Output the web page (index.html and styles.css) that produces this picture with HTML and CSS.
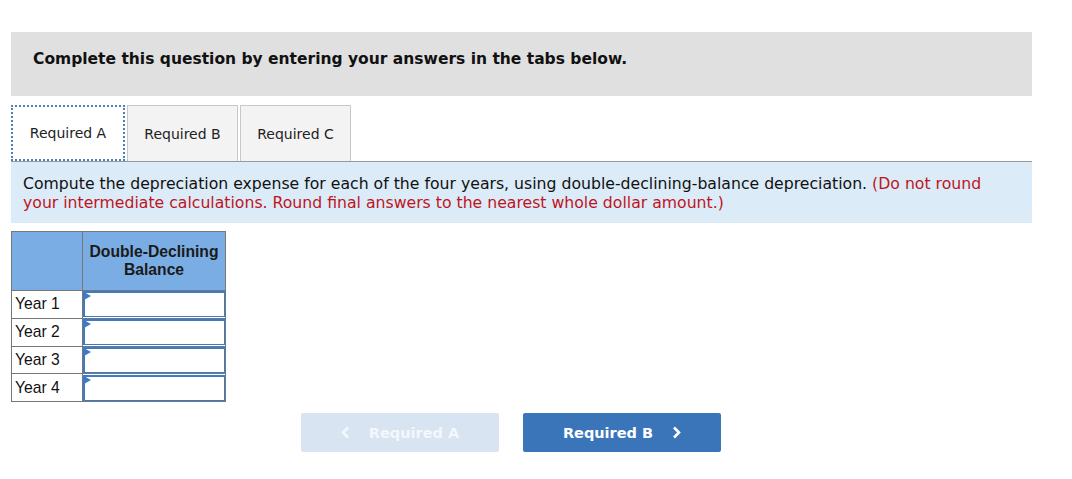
FILE: index.html
```html
<!DOCTYPE html>
<html>
<head>
<meta charset="utf-8">
<link rel="stylesheet" href="styles.css">
</head>
<body>
<div class="page">
  <div class="banner">Complete this question by entering your answers in the tabs below.</div>
  <div class="tabs">
    <div class="tab active">Required A</div>
    <div class="tab">Required B</div>
    <div class="tab">Required C</div>
  </div>
  <div class="instr">Compute the depreciation expense for each of the four years, using double-declining-balance depreciation. <span class="red">(Do not round your intermediate calculations. Round final answers to the nearest whole dollar amount.)</span></div>
  <table class="grid">
    <tr class="head"><th class="c1"></th><th class="c2">Double-Declining<br>Balance</th></tr>
    <tr><td class="c1">Year 1</td><td class="c2"><div class="inp"></div></td></tr>
    <tr><td class="c1">Year 2</td><td class="c2"><div class="inp"></div></td></tr>
    <tr><td class="c1">Year 3</td><td class="c2"><div class="inp"></div></td></tr>
    <tr><td class="c1">Year 4</td><td class="c2"><div class="inp"></div></td></tr>
  </table>
  <div class="nav">
    <div class="btn prev"><svg class="chev l" width="9" height="13" viewBox="0 0 9 13"><path d="M7 1.5 L2 6.5 L7 11.5" fill="none" stroke="currentColor" stroke-width="2.6"/></svg>Required A</div>
    <div class="btn next">Required B<svg class="chev r" width="9" height="13" viewBox="0 0 9 13"><path d="M2 1.5 L7 6.5 L2 11.5" fill="none" stroke="currentColor" stroke-width="2.6"/></svg></div>
  </div>
</div>
</body>
</html>
```
FILE: styles.css
```css
html, body { margin: 0; padding: 0; background: #fff; }
.page { padding: 32px 0 0 11px; width: 1021px; font-family: "DejaVu Sans", Verdana, sans-serif; }
.banner { height: 64px; background: #e0e0e0; box-sizing: border-box; padding: 18px 0 0 22px; font-weight: bold; font-size: 15.5px; color: #111; }
.tabs { display: flex; gap: 2px; margin-top: 9px; border-bottom: 1px solid #999; height: 56px; }
.tab { width: 111px; box-sizing: border-box; height: 56px; border: 1px solid #c8c8c8; border-bottom: none; background: #f3f3f3; font-size: 14px; color: #222; display: flex; align-items: center; justify-content: center; }
.tab.active { width: 114px; background: #fff; border: 2px dotted #4a7fc0; }
.instr { background: #dbebf8; padding: 12px 30px 11px 12px; font-size: 15.7px; line-height: 19px; color: #111; }
.red { color: #c0141c; }
.grid { margin-top: 8px; border-collapse: collapse; font-family: "Liberation Sans", Arial, sans-serif; }
.grid th, .grid td { border: 1px solid #777; padding: 0; }
.head th { background: #7aade4; height: 58px; font-size: 15.7px; font-weight: bold; color: #1a1a1a; line-height: 18px; }
.grid .c1 { width: 67px; }
.grid .c2 { width: 142px; }
.grid td { height: 26.75px; }
.grid td.c1 { font-size: 15.7px; color: #111; padding-left: 3px; }
.inp { height: 23px; border: 2px solid #3e7bc6; border-right-width: 1px; border-bottom-width: 1px; background: #fff; position: relative; }
.inp::before { content: ""; position: absolute; left: -1px; top: -1px; border-left: 7px solid #3e7bc6; border-top: 4px solid transparent; border-bottom: 4px solid transparent; }
.nav { display: flex; gap: 24px; margin-top: 11px; padding-left: 290px; }
.btn { width: 198px; height: 39px; border-radius: 2px; display: flex; align-items: center; justify-content: center; font-family: "DejaVu Sans", Tahoma, sans-serif; font-weight: bold; font-size: 14.5px; color: #fff; }
.prev { background: #d8e4f1; color: #f4f7fb; }
.next { background: #3a75ba; }
.chev { display: block; }
.chev.l { margin-right: 19px; }
.chev.r { margin-left: 19px; }
```
